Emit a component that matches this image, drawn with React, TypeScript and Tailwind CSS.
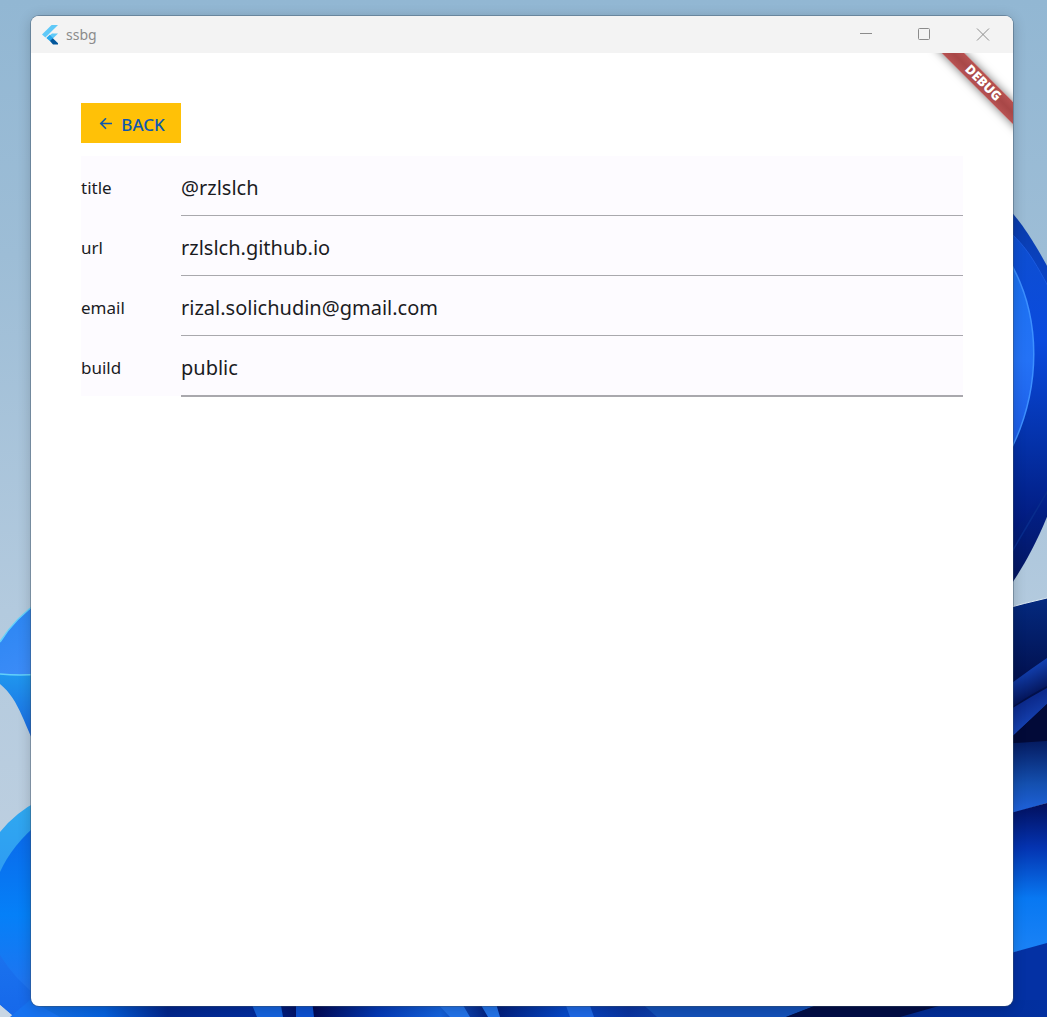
import React from "react";

const fields = [
  { name: "title", type: "text", value: "@rzlslch" },
  { name: "url", type: "text", value: "rzlslch.github.io" },
  { name: "email", type: "email", value: "rizal.solichudin@gmail.com" },
  { name: "build", type: "text", value: "public" },
];

function Wallpaper() {
  return (
    <svg className="absolute inset-0 h-full w-full" viewBox="0 0 1047 1017" preserveAspectRatio="none" aria-hidden="true">
      <defs>
        <linearGradient id="sky" x1="0" y1="0" x2="0" y2="1">
          <stop offset="0" stopColor="#92b7d3" />
          <stop offset="0.25" stopColor="#9dbdd6" />
          <stop offset="0.6" stopColor="#b3cade" />
          <stop offset="1" stopColor="#c3d2e1" />
        </linearGradient>
        <linearGradient id="bloomOuter" x1="0" y1="215" x2="0" y2="582" gradientUnits="userSpaceOnUse">
          <stop offset="0" stopColor="#0a3cab" />
          <stop offset="0.3" stopColor="#0a48d6" />
          <stop offset="0.55" stopColor="#063cc4" />
          <stop offset="0.8" stopColor="#021f86" />
          <stop offset="1" stopColor="#04165f" />
        </linearGradient>
        <linearGradient id="bloomMid" x1="0" y1="235" x2="0" y2="535" gradientUnits="userSpaceOnUse">
          <stop offset="0" stopColor="#0e4fd0" />
          <stop offset="0.35" stopColor="#0a4ade" />
          <stop offset="0.7" stopColor="#0431a8" />
          <stop offset="1" stopColor="#02187a" />
        </linearGradient>
        <linearGradient id="bloomInner" x1="0" y1="270" x2="0" y2="450" gradientUnits="userSpaceOnUse">
          <stop offset="0" stopColor="#1b70f0" />
          <stop offset="0.5" stopColor="#2472f6" />
          <stop offset="1" stopColor="#1c5ae6" />
        </linearGradient>
        <linearGradient id="navy" x1="0" y1="600" x2="0" y2="750" gradientUnits="userSpaceOnUse">
          <stop offset="0" stopColor="#04297e" />
          <stop offset="0.5" stopColor="#021252" />
          <stop offset="1" stopColor="#020a32" />
        </linearGradient>
        <linearGradient id="ridgeA" x1="1020" y1="672" x2="1034" y2="700" gradientUnits="userSpaceOnUse">
          <stop offset="0" stopColor="#1240b0" />
          <stop offset="1" stopColor="#020e4c" />
        </linearGradient>
        <linearGradient id="ridgeB" x1="1020" y1="704" x2="1032" y2="728" gradientUnits="userSpaceOnUse">
          <stop offset="0" stopColor="#0c2a8c" />
          <stop offset="1" stopColor="#1746b8" />
        </linearGradient>
        <linearGradient id="foldA" x1="0" y1="742" x2="0" y2="812" gradientUnits="userSpaceOnUse">
          <stop offset="0" stopColor="#051c62" />
          <stop offset="0.6" stopColor="#1450b0" />
          <stop offset="1" stopColor="#1f62dc" />
        </linearGradient>
        <linearGradient id="foldB" x1="0" y1="803" x2="0" y2="950" gradientUnits="userSpaceOnUse">
          <stop offset="0" stopColor="#020f5c" />
          <stop offset="0.3" stopColor="#0433b0" />
          <stop offset="0.65" stopColor="#0878f2" />
          <stop offset="1" stopColor="#1a82f6" />
        </linearGradient>
        <linearGradient id="leaf" x1="0" y1="610" x2="31" y2="680" gradientUnits="userSpaceOnUse">
          <stop offset="0" stopColor="#2b86f2" />
          <stop offset="1" stopColor="#3d8cf8" />
        </linearGradient>
        <linearGradient id="leafTail" x1="0" y1="675" x2="0" y2="740" gradientUnits="userSpaceOnUse">
          <stop offset="0" stopColor="#1f96ee" />
          <stop offset="1" stopColor="#1a66e0" />
        </linearGradient>
        <linearGradient id="petalRim" x1="0" y1="806" x2="0" y2="1017" gradientUnits="userSpaceOnUse">
          <stop offset="0" stopColor="#2fa8f0" />
          <stop offset="0.3" stopColor="#2f9df2" />
          <stop offset="0.7" stopColor="#1a72ee" />
          <stop offset="1" stopColor="#1668ea" />
        </linearGradient>
        <linearGradient id="petal" x1="0" y1="830" x2="0" y2="1000" gradientUnits="userSpaceOnUse">
          <stop offset="0" stopColor="#0a6aea" />
          <stop offset="0.5" stopColor="#0580f8" />
          <stop offset="1" stopColor="#2472ee" />
        </linearGradient>
        <linearGradient id="floor" x1="0" y1="0" x2="1047" y2="0" gradientUnits="userSpaceOnUse">
          <stop offset="0.03" stopColor="#1672e6" />
          <stop offset="0.1" stopColor="#0560dc" />
          <stop offset="0.16" stopColor="#02268c" />
          <stop offset="0.24" stopColor="#022c9c" />
          <stop offset="0.3" stopColor="#020a56" />
          <stop offset="0.36" stopColor="#0438b4" />
          <stop offset="0.42" stopColor="#1462dc" />
          <stop offset="0.47" stopColor="#021c78" />
          <stop offset="0.54" stopColor="#0648c8" />
          <stop offset="0.6" stopColor="#0a34a0" />
          <stop offset="0.7" stopColor="#1456c0" />
          <stop offset="0.78" stopColor="#020a30" />
          <stop offset="0.88" stopColor="#022c94" />
          <stop offset="1" stopColor="#0230a0" />
        </linearGradient>
      </defs>
      <rect width="1047" height="1017" fill="url(#sky)" />

      <path d="M1000 199 C1020 220 1034 240 1060 290 V482 C1040 540 1025 565 1000 601Z" fill="url(#bloomOuter)" />
      <path d="M1000 225 C1025 242 1036 262 1060 310 V450 C1040 500 1025 520 1000 547Z" fill="url(#bloomMid)" />
      <path d="M1000 225 C1025 242 1036 262 1060 310" fill="none" stroke="#1a5ae0" strokeWidth="1" />
      <path d="M1000 246 C1045 310 1045 395 1000 470Z" fill="url(#bloomInner)" stroke="#3d90ff" strokeWidth="1.5" />
      <path d="M1000 572 C1025 530 1035 512 1060 470" fill="none" stroke="#082c8c" strokeWidth="1.5" />

      <path d="M1000 610 Q1025 603 1047 598 V760 H1000Z" fill="url(#navy)" />
      <path d="M1000 610 Q1025 603 1047 598" fill="none" stroke="#dce9f2" strokeWidth="1" />
      <path d="M1000 692 Q1025 673 1047 658 V686 Q1025 697 1000 716Z" fill="url(#ridgeA)" />
      <path d="M1000 716 Q1025 700 1047 688 V704 Q1028 722 1000 748Z" fill="url(#ridgeB)" />
      <path d="M1000 748 Q1028 722 1047 704 V742 L1000 744Z" fill="#020a38" />
      <path d="M1000 744 L1047 741 V803 L1000 817Z" fill="url(#foldA)" />
      <path d="M1000 816 L1047 803 V944 L1000 956Z" fill="url(#foldB)" />
      <path d="M1000 956 L1047 943 V1017 H1000Z" fill="#0431a4" />

      <path d="M40 601 Q15 618 0 642 V674 Q20 676 40 674Z" fill="url(#leaf)" />
      <path d="M0 674 Q20 676 40 674 V755 C25 728 20 700 0 684Z" fill="url(#leafTail)" />
      <path d="M0 642 Q15 618 40 601 M0 674 Q20 676 40 674" fill="none" stroke="#62d0fa" strokeWidth="1.5" />

      <path d="M40 800 Q16 812 0 832 V1005 L14 1017 H60Z" fill="url(#petalRim)" />
      <path d="M40 822 Q12 845 0 872 V955 Q15 980 40 998Z" fill="url(#petal)" />
      <path d="M0 1005 L14 1017 H0Z" fill="#c8d6e4" />

      <path d="M30 1000 H1047 V1017 H52Z" fill="url(#floor)" />
      <path d="M30 1000 L60 1017 H10Z" fill="#1672f0" />
      <path d="M250 1000 L257 1017 H283 L280 1000Z" fill="#1462dc" />
      <path d="M296 1000 V1017 H314 L312 1000Z" fill="#0c50d0" />
      <path d="M434 1000 L450 1017 H470 L460 1000Z M478 1000 L488 1017 H500 L495 1000Z" fill="#2272e8" />
      <path d="M564 1000 L570 1017 H594 L588 1000Z" fill="#1e68e4" />
      <path d="M638 1000 L657 1017 H786 L830 1000Z" fill="#1350b8" />
      <path d="M786 1017 L830 1000 H960 L900 1017Z" fill="#020d46" />
    </svg>
  );
}

function FlutterLogo() {
  return (
    <svg className="h-5 w-4" viewBox="0 0 16 20" aria-hidden="true">
      <path d="M9.6 0 H16 L3.4 12.6 L0 9.6Z" fill="#5fc9f8" />
      <path d="M10 8.4 H16 L8.4 16 L4.6 12.7Z" fill="#5fc9f8" />
      <path d="M7.7 15.8 L10.6 12.9 L16 18.2 V19.6 H11Z" fill="#02569b" />
      <path d="M4.4 12.9 L7.8 9.8 L11 13 L7.8 16.1Z" fill="#29a9ee" />
    </svg>
  );
}

function TitleBar() {
  return (
    <header className="flex h-[37px] shrink-0 items-center bg-[#f3f3f3] pl-[11px] text-[#8b8b8b]">
      <div className="flex items-center gap-2">
        <FlutterLogo />
        <h1 className="text-sm">ssbg</h1>
      </div>
      <div className="ml-auto flex h-full">
        <button type="button" aria-label="Minimize" className="flex w-[58px] items-center justify-center">
          <svg width="14" height="14" viewBox="0 0 14 14" fill="none" stroke="currentColor">
            <path d="M1 5.5H13" />
          </svg>
        </button>
        <button type="button" aria-label="Maximize" className="flex w-[58px] items-center justify-center">
          <svg width="14" height="14" viewBox="0 0 14 14" fill="none" stroke="currentColor">
            <rect x="1.5" y="0.5" width="11" height="11" rx="1" />
          </svg>
        </button>
        <button type="button" aria-label="Close" className="flex w-[60px] items-center justify-center">
          <svg width="14" height="14" viewBox="0 0 14 14" fill="none" stroke="currentColor">
            <path d="M1 0.5L13 12.5M13 0.5L1 12.5" />
          </svg>
        </button>
      </div>
    </header>
  );
}

function DebugBanner() {
  return (
    <div className="pointer-events-none absolute top-0 right-0 h-28 w-28 overflow-hidden">
      <div className="absolute top-[22px] -right-[30px] flex h-4 w-[120px] rotate-45 items-center justify-center bg-linear-to-b from-[#b75252] via-[#a84747] to-[#b75252] text-[13px] font-black text-white shadow-[0_0_10px_rgba(0,0,0,0.55)]">
        DEBUG
      </div>
    </div>
  );
}

export default function App() {
  return (
    <div className="relative isolate flex min-h-screen overflow-hidden bg-[#9dbdd6] pt-4 pr-[34px] pb-[11px] pl-[31px] font-['Noto_Sans',sans-serif]">
      <Wallpaper />
      <div className="relative flex flex-1 flex-col overflow-hidden rounded-lg bg-white shadow-[0_0_0_1px_rgba(60,80,100,0.4),0_2px_14px_rgba(0,0,0,0.2)]">
        <TitleBar />
        <main className="relative flex-1 p-[50px]">
          <DebugBanner />
          <button type="button" className="flex h-10 w-[100px] items-center justify-center gap-2 bg-[#ffc107] pt-1 pl-0.5 text-[17px] font-medium text-[#0d57b0]">
            <svg width="14" height="14" viewBox="0 0 14 14" fill="none" stroke="currentColor" strokeWidth="1.6" aria-hidden="true">
              <path d="M13 5.5H2M7 0.3L1.8 5.5L7 10.7" />
            </svg>
            BACK
          </button>
          <form className="mt-[13px] bg-[#fdfbff] text-[#1b1b1f]">
            {fields.map((field) => (
              <div key={field.name} className="group flex h-[60px]">
                <label htmlFor={field.name} className="flex w-[100px] items-center pt-1 text-[17px]">
                  {field.name}
                </label>
                <input
                  id={field.name}
                  type={field.type}
                  defaultValue={field.value}
                  className="h-[60px] min-w-0 flex-1 border-b border-[#a9a8ad] bg-transparent pt-1 text-xl outline-none group-last:h-[61px] group-last:border-b-2"
                />
              </div>
            ))}
          </form>
        </main>
      </div>
    </div>
  );
}
